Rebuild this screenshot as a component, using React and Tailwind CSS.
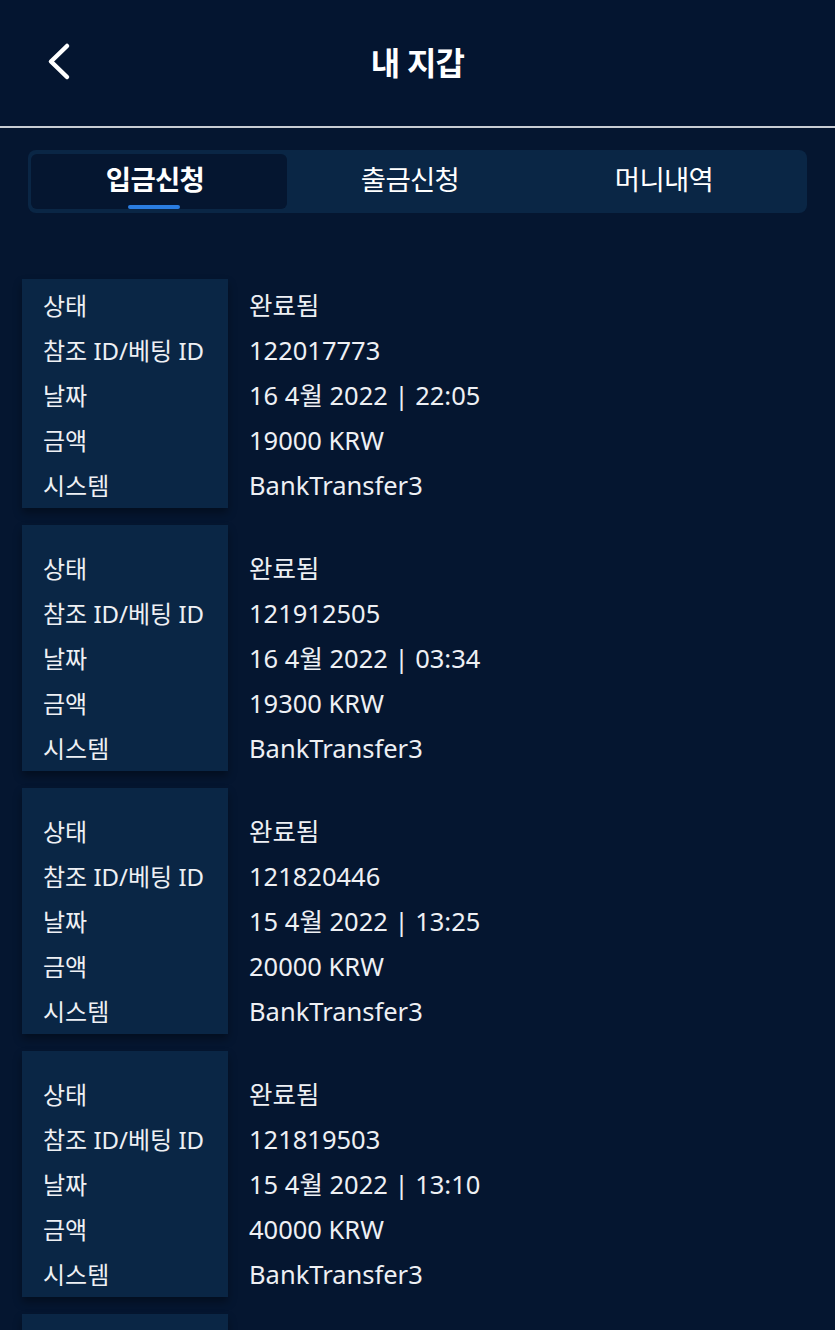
import React, { useState } from 'react';

const deposits = [
  { id: '122017773', date: '16 4월 2022 | 22:05', amount: '19000 KRW' },
  { id: '121912505', date: '16 4월 2022 | 03:34', amount: '19300 KRW' },
  { id: '121820446', date: '15 4월 2022 | 13:25', amount: '20000 KRW' },
  { id: '121819503', date: '15 4월 2022 | 13:10', amount: '40000 KRW' },
  { id: '121733018', date: '14 4월 2022 | 20:41', amount: '10000 KRW' },
];

const tabs = ['입금신청', '출금신청', '머니내역'];

const font = { fontFamily: '"Noto Sans", "Noto Sans CJK KR", sans-serif' };

function Row({ label, value }) {
  return (
    <div className="flex h-[45px]">
      <div className="w-[206px] shrink-0 pl-[21px] flex items-center text-[24px]">{label}</div>
      <div className="pl-[21px] flex items-center text-[25.5px]">{value}</div>
    </div>
  );
}

function DepositCard({ item, first }) {
  return (
    <div className="relative">
      {/* label column background */}
      <div className="absolute left-0 top-0 bottom-0 w-[206px] bg-[#0a2645] shadow-[0_5px_8px_rgba(0,0,0,0.35)]" />
      <div className={`relative ${first ? 'pt-[4px]' : 'pt-[21px]'}`}>
        <Row label="상태" value="완료됨" />
        <Row label="참조 ID/베팅 ID" value={item.id} />
        <Row label="날짜" value={item.date} />
        <Row label="금액" value={item.amount} />
        <Row label="시스템" value="BankTransfer3" />
      </div>
    </div>
  );
}

export default function App() {
  const [active, setActive] = useState(0);

  return (
    <div className="min-h-screen bg-[#051630] text-white" style={font}>
      <header className="h-[126px] bg-[#041530] grid grid-cols-[1fr_auto_1fr] items-center">
        <button className="justify-self-start ml-[44px] mb-[2px]">
          <svg width="30" height="40" viewBox="0 0 30 40" fill="none">
            <polyline points="23,4 7,19.5 23,35" stroke="white" strokeWidth="4.5" strokeLinecap="round" strokeLinejoin="round" />
          </svg>
        </button>
        <h1 className="text-[32px] font-bold tracking-tight">내 지갑</h1>
        <div />
      </header>
      <div className="h-[2px] bg-[#c8ccd3]" />

      <div className="mt-[22px] mx-[28px] h-[63px] rounded-lg bg-[#0a2645] flex items-stretch px-[3px] py-[4px]">
        {tabs.map((t, i) => (
          <button
            key={t}
            onClick={() => setActive(i)}
            className={`w-[254px] first:w-[256px] relative flex items-center justify-center rounded-md text-[27.5px] tracking-tight ${
              active === i ? 'bg-[#051630] font-bold' : 'font-normal'
            }`}
          >
            <span className="-mt-[4px] -ml-[8px]">{t}</span>
            {active === i && (
              <span className="absolute bottom-[0px] left-[97px] w-[52px] h-[4px] rounded-full bg-[#2a7de1]" />
            )}
          </button>
        ))}
      </div>

      <div className="mt-[66px] pl-[22px] flex flex-col gap-[17px] text-[#eef0f4]">
        {deposits.map((d, i) => (
          <DepositCard key={d.id} item={d} first={i === 0} />
        ))}
      </div>
    </div>
  );
}
